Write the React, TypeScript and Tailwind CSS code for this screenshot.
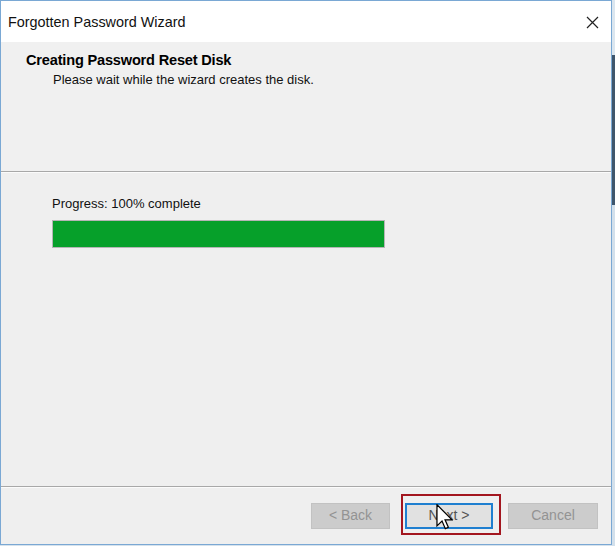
import React from "react";

const font = { fontFamily: '"Liberation Sans", Arial, sans-serif' };

function Cursor() {
  return (
    <svg width="17" height="26" viewBox="0 0 12 19" className="block">
      <path
        d="M0.5 0.5 L0.5 16 L4.2 12.4 L6.6 18 L8.8 17 L6.4 11.6 L11.5 11.6 Z"
        fill="#ffffff"
        stroke="#000000"
        strokeWidth="0.9"
        strokeLinejoin="miter"
      />
    </svg>
  );
}

export default function App() {
  return (
    <div className="w-[615px] h-[546px] flex bg-[#d6e2ec] overflow-hidden" style={font}>
      <div className="w-[612px] h-[545px] flex flex-col border border-[#7aa8d4] bg-[#efefef]">
        {/* Title bar */}
        <div className="h-[41px] bg-white flex items-center justify-between pl-[7px] pr-[12px] shrink-0">
          <span className="text-[14.4px] text-[#111] leading-none pt-[2px]">Forgotten Password Wizard</span>
          <svg width="13" height="13" viewBox="0 0 13 13" className="block mt-[2px]">
            <path d="M1 1 L12 12 M12 1 L1 12" stroke="#222" strokeWidth="1.2" />
          </svg>
        </div>
        {/* Header */}
        <div className="h-[129px] bg-[#f0f0f0] shrink-0 pt-[10px] pl-[25px]">
          <div className="text-[14.6px] font-bold text-[#000] leading-[17px] tracking-[-0.2px]">Creating Password Reset Disk</div>
          <div className="text-[13px] text-[#111] leading-[16px] pl-[27px] mt-[3px]">Please wait while the wizard creates the disk.</div>
        </div>
        <div className="h-[2px] border-t border-[#a8a8a8] border-b border-b-[#fbfbfb] shrink-0" />
        {/* Body */}
        <div className="flex-1 pl-[51px] pt-[23px]">
          <div className="text-[13px] text-[#111] leading-[16px]">Progress: 100% complete</div>
          <div className="mt-[8px] w-[333px] h-[28px] border border-[#b5b5b5] bg-[#e6e6e6]">
            <div className="h-full bg-[#06a02a]" style={{ width: "100%" }} />
          </div>
        </div>
        <div className="h-[2px] border-t border-[#a8a8a8] border-b border-b-[#fbfbfb] shrink-0" />
        {/* Footer */}
        <div className="h-[56px] shrink-0 flex items-center justify-end pr-[13px] pb-[1px]">
          <div className="w-[79px] h-[26px] bg-[#cccccc] border border-[#c2c2c2] flex items-center justify-center text-[14px] text-[#939393]">
            &lt; Back
          </div>
          <div className="relative ml-[15px]">
            <div className="w-[88px] h-[26px] bg-[#e1e1e1] border-2 border-[#1f7fd0] flex items-center justify-center text-[14px] text-[#555]">
              Next &gt;
            </div>
            <div className="absolute left-[-4px] top-[-9px] w-[100px] h-[41px] border-2 border-[#a3161f] pointer-events-none" />
            <div className="absolute left-[31px] top-[1px]">
              <Cursor />
            </div>
          </div>
          <div className="ml-[15px] w-[90px] h-[26px] bg-[#cccccc] border border-[#c2c2c2] flex items-center justify-center text-[14px] text-[#939393]">
            Cancel
          </div>
        </div>
      </div>
      <div className="flex-1 flex flex-col">
        <div className="h-[55px] bg-[#dbe6ef]" />
        <div className="h-[150px] bg-[#3f566c]" />
        <div className="flex-1 bg-[#d3e0eb]" />
      </div>
    </div>
  );
}
